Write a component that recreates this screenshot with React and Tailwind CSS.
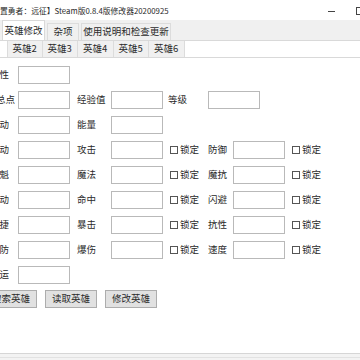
const T = {
  title: "置勇者：远征】Steam版0.8.4版修改器20200925",
  lock: "锁定",
};

const FONT = { fontFamily: '"Noto Sans CJK SC", "Noto Sans", sans-serif' };

function Box() {
  return <div className="h-[18px] w-[52px] shrink-0 border border-[#b9b9b9] bg-white" />;
}

function Lock() {
  return (
    <div className="ml-[7px] flex shrink-0 items-center">
      <div className="h-[8px] w-[8px] border border-[#555] bg-white" />
      <span className="ml-[2px] w-[19px]">{T.lock}</span>
    </div>
  );
}

function Left({ text, wide }) {
  return (
    <div className={`flex shrink-0 justify-end overflow-hidden whitespace-nowrap ${wide ? "w-[15px] mr-[3px]" : "w-[9px] mr-[9px]"}`}>
      <span>{text}</span>
    </div>
  );
}

function Row({ left, wide, mid, right, locks, extra }) {
  return (
    <div className="flex h-[25px] items-center">
      <Left text={left} wide={wide} />
      <Box />
      {mid && (
        <>
          <span className="ml-[7px] w-[34px] shrink-0">{mid}</span>
          <Box />
        </>
      )}
      {locks && (
        <>
          <Lock />
          <span className="ml-[9px] w-[25px] shrink-0">{right}</span>
          <Box />
          <Lock />
        </>
      )}
      {extra}
    </div>
  );
}

export default function App() {
  const subTabs = ["英雄2", "英雄3", "英雄4", "英雄5", "英雄6"];
  return (
    <div className="relative flex h-[360px] w-[360px] flex-col overflow-hidden bg-white text-[9.5px] leading-none text-[#2a2a2a]" style={FONT}>
      <div className="flex h-[20px] shrink-0 items-center pt-[2px]">
        <span className="whitespace-nowrap text-[7.8px]">{T.title}</span>
        <div className="ml-auto flex items-center">
          <div className="h-px w-[7px] bg-[#444]" />
          <div className="ml-[21px] mr-[-4px] h-[8px] w-[8px] border border-[#444]" />
        </div>
      </div>

      <div className="flex h-[20px] shrink-0 items-end bg-[#f0f0f0] pl-[2px]">
        <div className="flex h-[20px] w-[43px] items-center justify-center border border-b-0 border-[#d9d9d9] bg-white">英雄修改</div>
        <div className="ml-[2px] flex h-[17px] w-[32px] items-center justify-center border border-b-0 border-[#dcdcdc]">杂项</div>
        <div className="ml-[2px] flex h-[17px] w-[90px] items-center justify-center border border-b-0 border-[#dcdcdc]">使用说明和检查更新</div>
      </div>

      <div className="flex h-[18px] shrink-0 border-t border-b border-[#d9d9d9] pl-[7px]">
        {subTabs.map((t) => (
          <div key={t} className="flex w-[35.5px] items-center justify-center border-r border-[#dcdcdc] bg-[#f0f0f0] first:border-l">
            {t}
          </div>
        ))}
      </div>

      <div className="flex flex-col pt-[4px]">
        <Row left="性" />
        <Row
          left="余总点"
          wide
          mid="经验值"
          extra={
            <>
              <span className="ml-[5px] w-[40px] shrink-0">等级</span>
              <Box />
            </>
          }
        />
        <Row left="动" mid="能量" />
        <Row left="动" mid="攻击" right="防御" locks />
        <Row left="魁" mid="魔法" right="魔抗" locks />
        <Row left="动" mid="命中" right="闪避" locks />
        <Row left="捷" mid="暴击" right="抗性" locks />
        <Row left="防" mid="爆伤" right="速度" locks />
        <Row left="运" />
      </div>

      <div className="mt-[3px] flex gap-[8px]">
        {["搜索英雄", "读取英雄", "修改英雄"].map((b, i) => (
          <div
            key={b}
            className={`flex h-[18px] w-[52px] shrink-0 items-center justify-center border border-[#adadad] bg-[#e1e1e1] ${i === 0 ? "ml-[-15px]" : ""}`}
          >
            {b}
          </div>
        ))}
      </div>

      <div className="mt-auto h-[7px] shrink-0 border-t border-[#d6d6d6] bg-[#f3f3f3]">
        <div className="mt-[3px] h-px bg-[#e2e2e2]" />
      </div>
    </div>
  );
}
